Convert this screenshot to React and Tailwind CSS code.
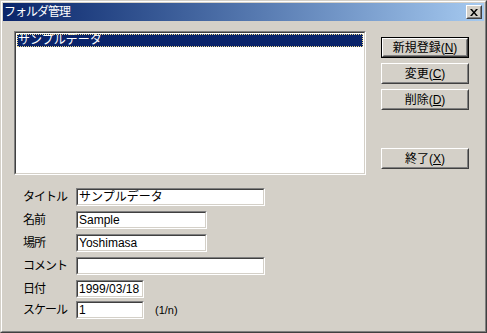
import React from "react";

const font = { fontFamily: '"Liberation Sans", "Noto Sans CJK JP", sans-serif' };

const Sunken = ({ className = "", children }) => (
    <div className={`border border-t-[#808080] border-l-[#808080] border-r-white border-b-white ${className}`}>
        <div className="h-full w-full border border-t-[#404040] border-l-[#404040] border-r-[#d4d0c8] border-b-[#d4d0c8] bg-white">
            {children}
        </div>
    </div>
);

const Button = ({ label, hot, primary, className = "" }) => (
    <div className={`w-[88px] h-[21px] ${primary ? "border border-black" : ""} ${className}`}>
        <div className="h-full w-full border border-t-white border-l-white border-r-[#404040] border-b-[#404040]">
            <div className="h-full w-full border border-t-[#d4d0c8] border-l-[#d4d0c8] border-r-[#808080] border-b-[#808080] flex items-center justify-center text-[12px] text-black leading-none">
                <span>{label}(<span className="underline">{hot}</span>)</span>
            </div>
        </div>
    </div>
);

const Field = ({ label, value, width, className = "", after }) => (
    <div className={`flex items-center h-[18px] ${className}`}>
        <div className="w-[62px] pl-[9px] text-[12px] text-black leading-none tracking-[-1px]">{label}</div>
        <Sunken className={`h-[18px] ${width}`}>
            <div className="h-full flex items-center pl-[1px] text-[12px] text-black leading-none">{value}</div>
        </Sunken>
        {after && <div className="ml-[11px] text-[11px] text-black leading-none">{after}</div>}
    </div>
);

const App = () => {
    return (
        <div style={font} className="w-[487px] h-[333px] bg-[#d4d0c8] border border-t-[#d4d0c8] border-l-[#d4d0c8] border-r-[#404040] border-b-[#404040] select-none">
            <div className="h-full border border-t-white border-l-white border-r-[#808080] border-b-[#808080] p-px flex flex-col">
                {/* title bar */}
                <div className="h-[18px] flex items-center justify-between bg-gradient-to-r from-[#0a246a] to-[#a6caf0] pl-[1px] pr-[2px]">
                    <span className="text-white text-[12px] leading-none tracking-[-1px]">フォルダ管理</span>
                    <div className="w-[16px] h-[14px] border border-t-white border-l-white border-r-[#404040] border-b-[#404040]">
                        <div className="h-full w-full border border-t-[#d4d0c8] border-l-[#d4d0c8] border-r-[#808080] border-b-[#808080] bg-[#d4d0c8] flex items-center justify-center">
                            <svg width="8" height="7" viewBox="0 0 8 7">
                                <path d="M0 0h2l2 2.5L6 0h2L5 3.5 8 7H6L4 4.5 2 7H0l3-3.5z" fill="black" />
                            </svg>
                        </div>
                    </div>
                </div>

                {/* body */}
                <div className="flex-1 flex pl-[11px] pt-[10px]">
                    <div className="w-[352px]">
                        <Sunken className="h-[144px]">
                            <div className="p-px">
                                <div className="h-[13px] bg-[#0a246a] outline outline-1 outline-dotted outline-[#f0dc8c] -outline-offset-1 text-white text-[12px] leading-[13px] pl-[1px]">
                                    サンプルデータ
                                </div>
                            </div>
                        </Sunken>

                        <div className="mt-[13px] flex flex-col">
                            <Field label="タイトル" value="サンプルデータ" width="w-[189px]" />
                            <Field label="名前" value="Sample" width="w-[131px]" className="mt-[5px]" />
                            <Field label="場所" value="Yoshimasa" width="w-[131px]" className="mt-[5px]" />
                            <Field label="コメント" value="" width="w-[189px]" className="mt-[5px]" />
                            <Field label="日付" value="1999/03/18" width="w-[68px]" className="mt-[5px]" />
                            <Field label="スケール" value="1" width="w-[68px]" className="mt-[3px]" after="(1/n)" />
                        </div>
                    </div>

                    <div className="ml-[15px] pt-[6px] flex flex-col">
                        <Button label="新規登録" hot="N" primary />
                        <Button label="変更" hot="C" className="mt-[5px]" />
                        <Button label="削除" hot="D" className="mt-[5px]" />
                        <Button label="終了" hot="X" className="mt-[38px]" />
                    </div>
                </div>
            </div>
        </div>
    );
};

export default App;
